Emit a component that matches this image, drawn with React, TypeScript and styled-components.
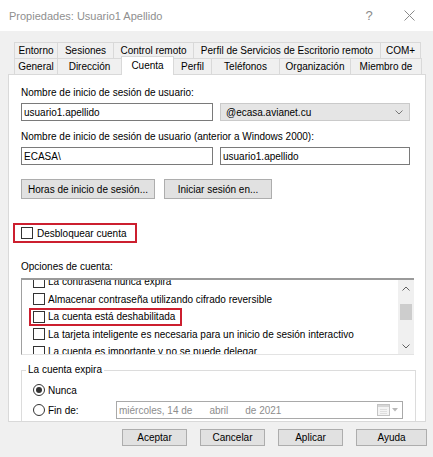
import React, { useLayoutEffect, useRef } from 'react'
import styled, { createGlobalStyle } from 'styled-components'

const GlobalStyle = createGlobalStyle`
  html, body {
    margin: 0;
    padding: 0;
    background: #f0f0f0;
  }

  body {
    font-family: "Liberation Sans", Arial, sans-serif;
    font-size: 10px;
    color: #000;
  }
`

const RED = '#cc1f2f'

const Dialog = styled.div`
  width: 433px;
  height: 457px;
  background: #f0f0f0;
  overflow: hidden;
  display: flex;
  flex-direction: column;

  & > * {
    flex-shrink: 0;
  }
`

const TitleBar = styled.div`
  height: 31px;
  background: #fff;
  display: flex;
  align-items: center;
  padding-left: 9px;
`

const Title = styled.div`
  font-size: 11px;
  color: #8f8f8f;
`

const TitleButtons = styled.div`
  margin-left: auto;
  margin-right: 4px;
  display: flex;
`

const TitleButton = styled.div`
  width: 40px;
  height: 31px;
  display: flex;
  align-items: center;
  justify-content: center;
  color: #8a8a8a;
  font-size: 13px;
`

const TabStrip = styled.div`
  padding: 11px 0 0 14px;
  display: flex;
  flex-direction: column;
`

const TabRow = styled.div`
  display: flex;
  height: 16px;
`

const Tab = styled.div<{ $width: number; $active?: boolean }>`
  width: ${p => p.$width}px;
  box-sizing: border-box;
  height: ${p => (p.$active ? 19 : 16)}px;
  margin-top: ${p => (p.$active ? -2 : 0)}px;
  margin-right: -1px;
  padding-bottom: ${p => (p.$active ? 2 : 0)}px;
  border: 1px solid #d9d9d9;
  border-bottom: none;
  background: ${p => (p.$active ? '#fff' : '#f0f0f0')};
  position: relative;
  z-index: ${p => (p.$active ? 2 : 0)};
  display: flex;
  align-items: center;
  justify-content: center;
  white-space: nowrap;
`

const Panel = styled.div`
  width: 418px;
  height: 348px;
  margin-left: 8px;
  box-sizing: border-box;
  border: 1px solid #d9d9d9;
  background: #fff;
  padding: 0 9px 0 12px;
  overflow: hidden;
  display: flex;
  flex-direction: column;
  align-items: stretch;

  & > * {
    flex-shrink: 0;
  }
`

const FieldLabel = styled.div<{ $gap: number }>`
  margin-top: ${p => p.$gap}px;
  height: 12px;
  line-height: 12px;
  white-space: nowrap;
`

const InputRow = styled.div`
  display: grid;
  grid-template-columns: 192px 190px;
  gap: 7px;
  margin-top: 4px;
  height: 18px;
`

const TextField = styled.input`
  box-sizing: border-box;
  height: 18px;
  margin: 0;
  border: 1px solid #7a7a7a;
  padding: 0 2px;
  font-family: inherit;
  font-size: 10px;
  color: #000;
  background: #fff;
  outline: none;
`

const Combo = styled.div`
  box-sizing: border-box;
  height: 18px;
  border: 1px solid #cacaca;
  background: #e5e5e5;
  display: flex;
  align-items: center;
  justify-content: space-between;
  padding: 0 6px 0 5px;
`

const ButtonRow = styled.div`
  display: flex;
  gap: 9px;
  margin-top: 14px;
  height: 20px;
`

const PushButton = styled.button<{ $width: number; $height?: number }>`
  width: ${p => p.$width}px;
  height: ${p => p.$height ?? 20}px;
  box-sizing: border-box;
  margin: 0;
  padding: 0;
  border: 1px solid #adadad;
  background: #e1e1e1;
  font-family: inherit;
  font-size: 10px;
  color: #000;
`

const CheckBox = styled.span`
  width: 12px;
  height: 12px;
  box-sizing: border-box;
  border: 1px solid #333;
  background: #fff;
  flex-shrink: 0;
`

const Radio = styled.span<{ $checked?: boolean }>`
  width: 12px;
  height: 12px;
  box-sizing: border-box;
  border-radius: 50%;
  border: 1px solid #333;
  background: #fff;
  display: flex;
  align-items: center;
  justify-content: center;
  flex-shrink: 0;

  &::after {
    content: '';
    width: 6px;
    height: 6px;
    border-radius: 50%;
    background: ${p => (p.$checked ? '#333' : 'transparent')};
  }
`

const UnlockOption = styled.label`
  align-self: flex-start;
  display: inline-flex;
  align-items: center;
  gap: 4px;
  height: 16px;
  margin: 26px 0 0 -6px;
  padding: 0 8px 0 6px;
  outline: 2px solid ${RED};
  white-space: nowrap;
`

const ListBox = styled.div`
  width: 393px;
  height: 77px;
  margin-top: 5px;
  box-sizing: border-box;
  border-top: 2px solid #9a9a9a;
  border-left: 1px solid #a0a0a0;
  border-bottom: 1px solid #e3e3e3;
  display: grid;
  grid-template-columns: 1fr 16px;
`

const ListViewport = styled.div`
  overflow: hidden;
  background: #fff;
`

const ListItem = styled.div`
  height: 17.5px;
  display: flex;
  align-items: center;
  padding-left: 9px;
  white-space: nowrap;
`

const ItemContent = styled.span<{ $marked?: boolean }>`
  display: inline-flex;
  align-items: center;
  gap: 3px;
  height: 14px;
  padding: 0 5px 0 2px;
  outline: ${p => (p.$marked ? `2px solid ${RED}` : 'none')};
`

const ScrollBar = styled.div`
  background: #f0f0f0;
  display: flex;
  flex-direction: column;
  align-items: center;
`

const ScrollArrow = styled.div`
  height: 16px;
  display: flex;
  align-items: center;
  justify-content: center;
`

const ScrollTrack = styled.div`
  flex: 1;
  width: 100%;
  display: flex;
  flex-direction: column;
  align-items: center;
`

const ScrollThumb = styled.div`
  width: 12px;
  height: 16px;
  margin-top: 8px;
  background: #cdcdcd;
`

const GroupBox = styled.fieldset`
  margin: 9px 0 0;
  padding: 0;
  border: 1px solid #dcdcdc;
  min-width: 0;
  height: 64px;
`

const GroupLegend = styled.legend`
  margin-left: 4px;
  padding: 0 2px;
  line-height: 12px;
`

const RadioOption = styled.label<{ $gap: number; $indent: number }>`
  display: flex;
  align-items: center;
  gap: 3px;
  height: 16px;
  margin-top: ${p => p.$gap}px;
  padding-left: ${p => p.$indent}px;
  white-space: nowrap;
`

const ExpiryRow = styled.div`
  display: grid;
  grid-template-columns: 83px 287px;
  align-items: center;
  margin-top: 3px;
  padding-left: 11px;
`

const DateBox = styled.div`
  box-sizing: border-box;
  height: 18px;
  border: 1px solid #a9a9a9;
  background: #fff;
  color: #8d8d8d;
  display: flex;
  align-items: center;
  gap: 17px;
  padding: 0 4px 0 2px;
  white-space: nowrap;
`

const DateIcon = styled.div`
  margin-left: auto;
  display: flex;
  align-items: center;
  gap: 2px;
`

const Footer = styled.div`
  display: flex;
  justify-content: flex-end;
  gap: 13px;
  margin-top: 7px;
  padding-right: 6px;
`

const Chevron = ({ up, color = '#606060' }: { up?: boolean; color?: string }) => (
  <svg width="8" height="5" viewBox="0 0 8 5">
    <path
      d={up ? 'M0.5 4.5 L4 1 L7.5 4.5' : 'M0.5 0.5 L4 4 L7.5 0.5'}
      fill="none"
      stroke={color}
      strokeWidth="1"
    />
  </svg>
)

const backTabs = [
  { label: 'Entorno', width: 44 },
  { label: 'Sesiones', width: 57 },
  { label: 'Control remoto', width: 81 },
  { label: 'Perfil de Servicios de Escritorio remoto', width: 188 },
  { label: 'COM+', width: 41 },
]

const frontTabs = [
  { label: 'General', width: 44 },
  { label: 'Dirección', width: 65 },
  { label: 'Cuenta', width: 53 },
  { label: 'Perfil', width: 39 },
  { label: 'Teléfonos', width: 69 },
  { label: 'Organización', width: 72 },
  { label: 'Miembro de', width: 72 },
]

const accountOptions = [
  'El usuario debe cambiar la contraseña en el siguiente inicio de sesión',
  'El usuario no puede cambiar la contraseña',
  'La contraseña nunca expira',
  'Almacenar contraseña utilizando cifrado reversible',
  'La cuenta está deshabilitada',
  'La tarjeta inteligente es necesaria para un inicio de sesión interactivo',
  'La cuenta es importante y no se puede delegar',
  'Usar solo tipos de cifrado DES de Kerberos para esta cuenta',
]

const footerButtons = [
  { label: 'Aceptar', width: 65 },
  { label: 'Cancelar', width: 65 },
  { label: 'Aplicar', width: 65 },
  { label: 'Ayuda', width: 71 },
]

const App = () => {
  const listRef = useRef<HTMLDivElement>(null)

  useLayoutEffect(() => {
    if (listRef.current) listRef.current.scrollTop = 42
  }, [])

  return (
    <>
      <GlobalStyle />
      <Dialog>
        <TitleBar>
          <Title>Propiedades: Usuario1 Apellido</Title>
          <TitleButtons>
            <TitleButton>?</TitleButton>
            <TitleButton>
              <svg width="11" height="11" viewBox="0 0 11 11">
                <path d="M0.5 0.5 L10.5 10.5 M10.5 0.5 L0.5 10.5" stroke="#8a8a8a" strokeWidth="1" />
              </svg>
            </TitleButton>
          </TitleButtons>
        </TitleBar>

        <TabStrip>
          <TabRow>
            {backTabs.map(t => (
              <Tab key={t.label} $width={t.width}>
                {t.label}
              </Tab>
            ))}
          </TabRow>
          <TabRow>
            {frontTabs.map(t => (
              <Tab key={t.label} $width={t.width} $active={t.label === 'Cuenta'}>
                {t.label}
              </Tab>
            ))}
          </TabRow>
        </TabStrip>

        <Panel>
          <FieldLabel $gap={12}>Nombre de inicio de sesión de usuario:</FieldLabel>
          <InputRow>
            <TextField readOnly value="usuario1.apellido" />
            <Combo>
              <span>@ecasa.avianet.cu</span>
              <Chevron color="#777" />
            </Combo>
          </InputRow>

          <FieldLabel $gap={10}>
            Nombre de inicio de sesión de usuario (anterior a Windows 2000):
          </FieldLabel>
          <InputRow>
            <TextField readOnly value="ECASA\" />
            <TextField readOnly value="usuario1.apellido" />
          </InputRow>

          <ButtonRow>
            <PushButton $width={134}>Horas de inicio de sesión...</PushButton>
            <PushButton $width={108}>Iniciar sesión en...</PushButton>
          </ButtonRow>

          <UnlockOption>
            <CheckBox />
            Desbloquear cuenta
          </UnlockOption>

          <FieldLabel $gap={20}>Opciones de cuenta:</FieldLabel>
          <ListBox>
            <ListViewport ref={listRef}>
              {accountOptions.map(o => (
                <ListItem key={o}>
                  <ItemContent $marked={o === 'La cuenta está deshabilitada'}>
                    <CheckBox />
                    {o}
                  </ItemContent>
                </ListItem>
              ))}
            </ListViewport>
            <ScrollBar>
              <ScrollArrow>
                <Chevron up />
              </ScrollArrow>
              <ScrollTrack>
                <ScrollThumb />
              </ScrollTrack>
              <ScrollArrow>
                <Chevron />
              </ScrollArrow>
            </ScrollBar>
          </ListBox>

          <GroupBox>
            <GroupLegend>La cuenta expira</GroupLegend>
            <RadioOption $gap={6} $indent={11}>
              <Radio $checked />
              Nunca
            </RadioOption>
            <ExpiryRow>
              <RadioOption $gap={0} $indent={0}>
                <Radio />
                Fin de:
              </RadioOption>
              <DateBox>
                <span>miércoles, 14 de</span>
                <span>abril</span>
                <span>de 2021</span>
                <DateIcon>
                  <svg width="13" height="12" viewBox="0 0 13 12">
                    <rect x="0.5" y="0.5" width="12" height="11" fill="#f4f4f4" stroke="#c4c4c4" />
                    <rect x="1" y="1" width="11" height="2" fill="#d6d6d6" />
                    <path d="M3 5.5 H10 M3 7.5 H10 M3 9.5 H10" stroke="#dedede" />
                  </svg>
                  <svg width="6" height="4" viewBox="0 0 6 4">
                    <path d="M0 0 H6 L3 3.5 Z" fill="#b8b8b8" />
                  </svg>
                </DateIcon>
              </DateBox>
            </ExpiryRow>
          </GroupBox>
        </Panel>

        <Footer>
          {footerButtons.map(b => (
            <PushButton key={b.label} $width={b.width} $height={17}>
              {b.label}
            </PushButton>
          ))}
        </Footer>
      </Dialog>
    </>
  )
}

export default App
